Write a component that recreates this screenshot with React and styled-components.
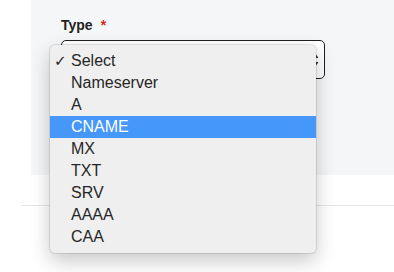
import React from 'react';
import styled, { createGlobalStyle } from 'styled-components';

const GlobalStyle = createGlobalStyle`
  html, body {
    margin: 0;
    padding: 0;
    background: #ffffff;
    font-family: "Liberation Sans", Arial, sans-serif;
  }
`;

const options = ['Select', 'Nameserver', 'A', 'CNAME', 'MX', 'TXT', 'SRV', 'AAAA', 'CAA'];

const Page = styled.div`
  position: relative;
  width: 394px;
  height: 272px;
  overflow: hidden;
`;

const Panel = styled.div`
  margin-left: 31px;
  height: 175px;
  box-sizing: border-box;
  padding: 17px 0 0 30px;
  background: #f5f6f8;
`;

const Label = styled.div`
  display: flex;
  gap: 8px;
  height: 16px;
  line-height: 16px;
  font-size: 14px;
  font-weight: bold;
  color: #222;
  margin-bottom: 7px;
`;

const Required = styled.span`
  color: #e02424;
  font-weight: bold;
`;

const SelectBox = styled.div`
  display: flex;
  justify-content: flex-end;
  align-items: center;
  width: 264px;
  height: 39px;
  box-sizing: border-box;
  padding-right: 5px;
  border: 1px solid #1f1f1f;
  border-radius: 5px;
  background: #fff;
`;

const Divider = styled.div`
  margin: 30px 0 0 21px;
  height: 1px;
  background: #e6e6e6;
`;

const Menu = styled.ul`
  position: absolute;
  left: 50px;
  top: 45px;
  width: 266px;
  margin: 0;
  padding: 5px 0;
  list-style: none;
  background: #efefef;
  border-radius: 5px;
  box-shadow: 0 0 0 1px rgba(0, 0, 0, 0.1), 0 8px 20px rgba(0, 0, 0, 0.22);
`;

const Item = styled.li`
  position: relative;
  height: 22px;
  line-height: 22px;
  padding-left: 21px;
  font-size: 16px;
  color: ${(p) => (p.$active ? '#ffffff' : '#262626')};
  background: ${(p) => (p.$active ? '#4597f9' : 'transparent')};
`;

const Check = styled.span`
  position: absolute;
  left: 4px;
  top: 0;
  font-size: 15px;
  font-family: "DejaVu Sans", sans-serif;
`;

const Arrows = () => (
  <svg width="8" height="16" viewBox="0 0 8 16">
    <path d="M4 1 L7.5 6 L0.5 6 Z" fill="#333" />
    <path d="M4 15 L7.5 10 L0.5 10 Z" fill="#333" />
  </svg>
);

const App = () => {
  return (
    <Page>
      <GlobalStyle />
      <Panel>
        <Label>
          Type<Required>*</Required>
        </Label>
        <SelectBox>
          <Arrows />
        </SelectBox>
      </Panel>
      <Divider />
      <Menu>
        {options.map((o) => (
          <Item key={o} $active={o === 'CNAME'}>
            {o === 'Select' && <Check>✓</Check>}
            {o}
          </Item>
        ))}
      </Menu>
    </Page>
  );
};

export default App;
